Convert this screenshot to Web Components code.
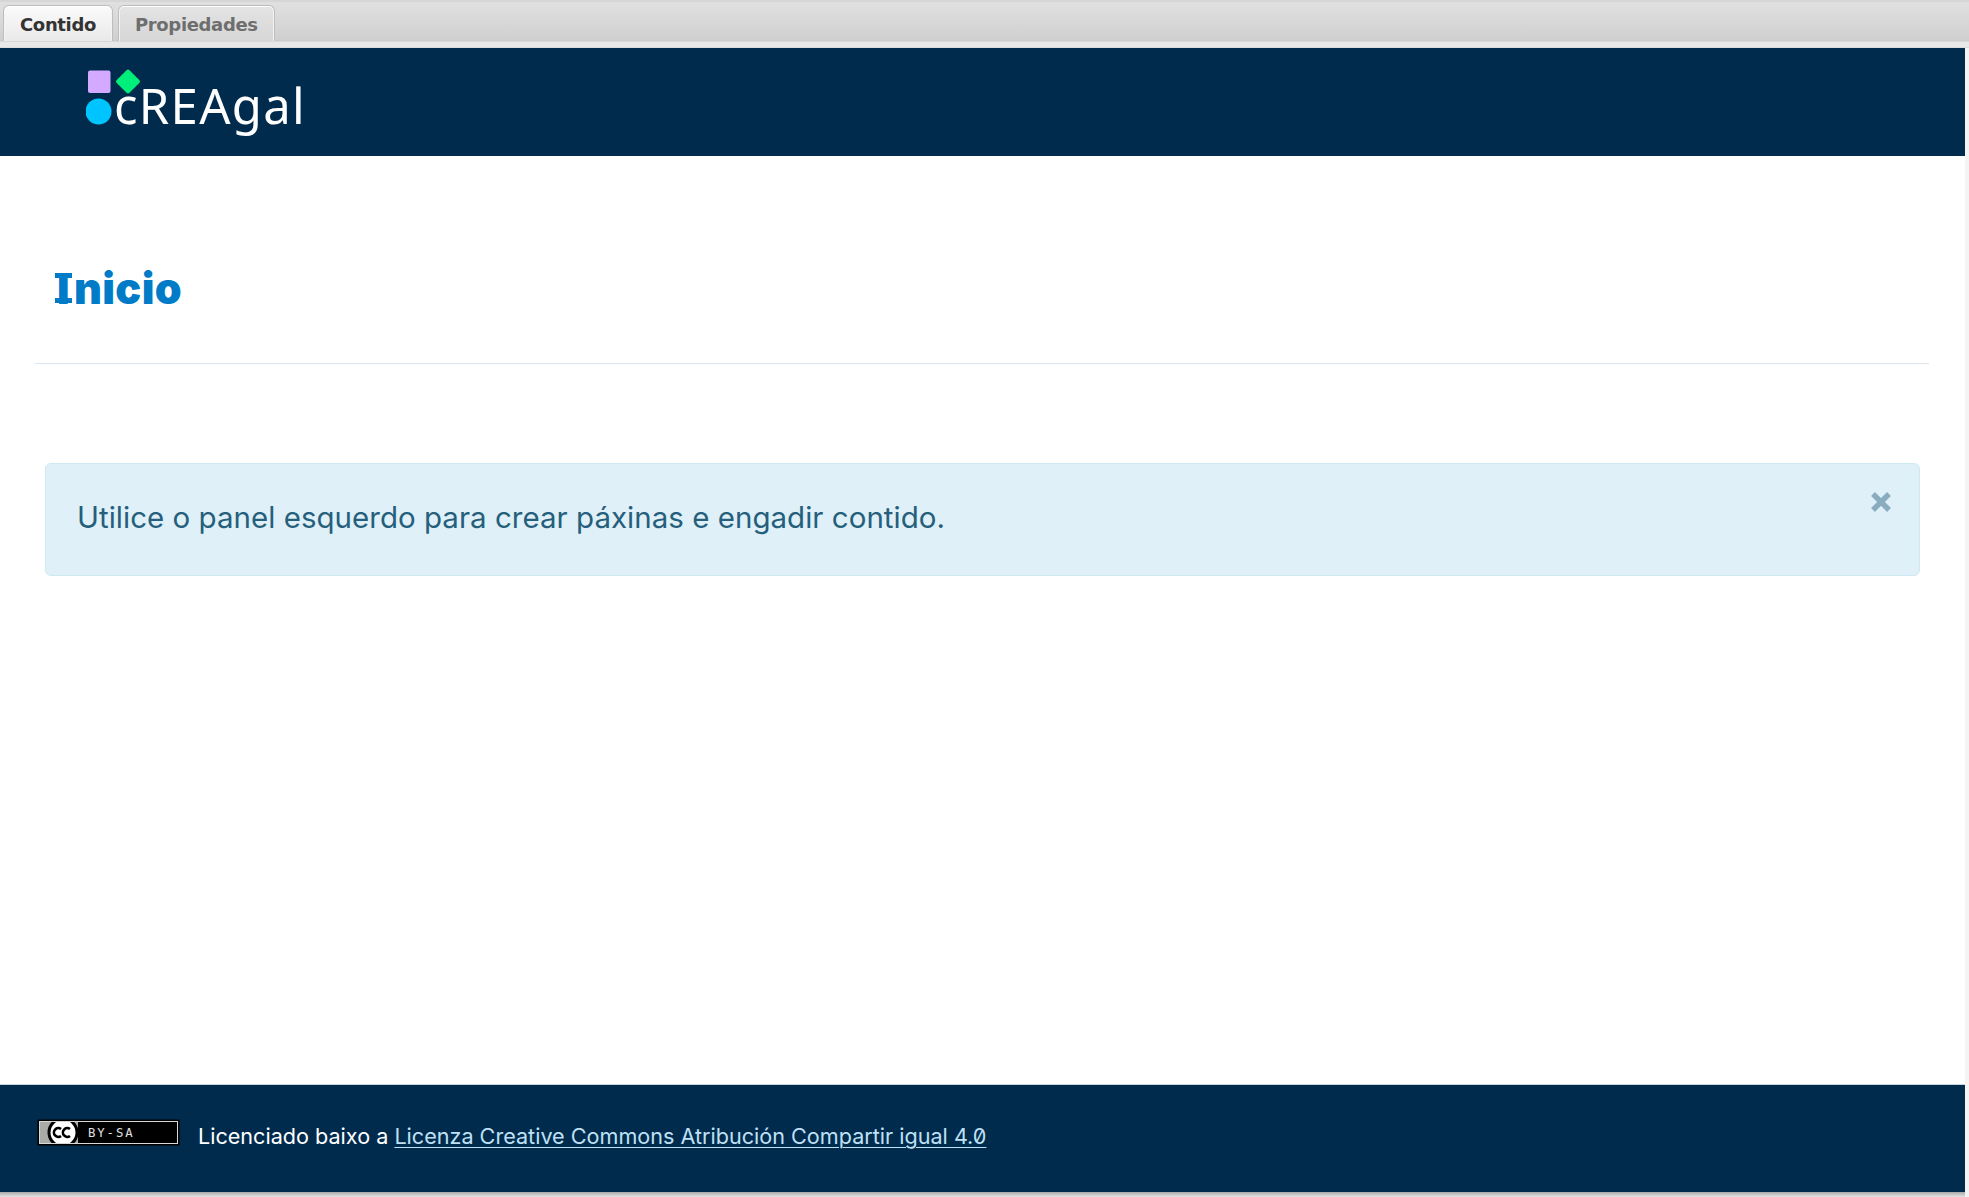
<!DOCTYPE html>
<html lang="gl">
<head>
<meta charset="utf-8">
<title>cREAgal</title>
<style>
    html, body { margin: 0; height: 100%; }
    body { background: #fff; font-family: Inter, "Noto Sans", sans-serif; overflow: hidden; }
</style>
</head>
<body>
<app-shell>
    <tab-bar slot="tabs">
        <tab-item active>Contido</tab-item>
        <tab-item>Propiedades</tab-item>
    </tab-bar>
    <site-header slot="header"></site-header>
    <page-title><span>I</span>nicio</page-title>
    <info-alert>Utilice o panel esquerdo para crear páxinas e engadir contido.</info-alert>
    <site-footer slot="footer">
        Licenciado baixo a <a href="#" slot="link">Licenza Creative Commons Atribución Compartir igual 4.0</a>
    </site-footer>
</app-shell>

<script>
class AppShell extends HTMLElement {
    constructor() {
        super()
        this.attachShadow( { mode: 'open' } )
        this.shadowRoot.innerHTML = `
            <style>
                :host { display: flex; flex-direction: column; height: 1197px; width: 1969px; background: linear-gradient(90deg, #dcdcdc 0, #f4f4f4 2px); }
                .page { flex: 1; display: flex; flex-direction: column; width: 1965px; background: #fff; }
                main { flex: 1; }
                .edge { height: 5px; width: 1965px; background: linear-gradient(#a9a9a9, #e4e4e4); }
            </style>
            <slot name="tabs"></slot>
            <div class="page">
                <slot name="header"></slot>
                <main><slot></slot></main>
                <slot name="footer"></slot>
            </div>
            <div class="edge"></div>
        `
    }
}

class TabBar extends HTMLElement {
    constructor() {
        super()
        this.attachShadow( { mode: 'open' } )
        this.shadowRoot.innerHTML = `
            <style>
                :host { display: flex; box-sizing: border-box; height: 48px; padding: 3px 0 0 3px; gap: 5px; align-items: flex-start;
                    border-top: 2px solid #d6d6d6;
                    background: linear-gradient(#e0e0e0 0, #d0d0d0 38px, #c8c8c8 39px, #e8e8e8 40px, #e8e8e8 45px, #cfcfcf 46px); }
            </style>
            <slot></slot>
        `
    }
}

class TabItem extends HTMLElement {
    constructor() {
        super()
        this.attachShadow( { mode: 'open' } )
        this.shadowRoot.innerHTML = `
            <style>
                :host { display: block; box-sizing: border-box; height: 36px; padding: 0 16px;
                    font: bold 18px/38px "DejaVu Sans", sans-serif; letter-spacing: -0.35px; color: #6e6e6e;
                    border: 1px solid #bdbdbd; border-bottom: 0; border-radius: 6px 6px 0 0;
                    box-shadow: inset 0 1px 0 #fff, inset 1px 0 0 #f4f4f4, inset -1px 0 0 #f4f4f4;
                    background: linear-gradient(#e4e4e4, #d6d6d6); }
                :host([active]) { color: #333; background: linear-gradient(#fbfbfb, #e9e9e9); }
            </style>
            <slot></slot>
        `
    }
}

class SiteHeader extends HTMLElement {
    constructor() {
        super()
        this.attachShadow( { mode: 'open' } )
        this.shadowRoot.innerHTML = `
            <style>
                :host { display: block; height: 108px; background: #002b4d; }
                .logo { display: flex; align-items: flex-start; padding: 20px 0 0 86px; }
                svg { display: block; flex: none; width: 56px; height: 58px; margin-right: -28px; }
                span { font: 400 49px/56px "Noto Sans", sans-serif; color: #fff; letter-spacing: 1.3px; margin-top: 9px; }
            </style>
            <div class="logo">
                <svg viewBox="0 0 56 58">
                    <rect x="2" y="2.5" width="22.5" height="22.5" rx="2" fill="#d3aaff"/>
                    <rect x="33" y="4.5" width="18" height="18" rx="2" fill="#00ee7a" transform="rotate(45 42 13.5)"/>
                    <circle cx="12.5" cy="43.5" r="13" fill="#00c4ff"/>
                </svg>
                <span>cREAgal</span>
            </div>
        `
    }
}

class PageTitle extends HTMLElement {
    constructor() {
        super()
        this.attachShadow( { mode: 'open' } )
        this.shadowRoot.innerHTML = `
            <style>
                :host { display: block; margin: 0 36px 0 35px; padding: 107px 0 50px 20px; border-bottom: 1px solid #dbe6ec; }
                h1 { margin: 0; font: 900 43px/50px Inter, sans-serif; color: #007bc7; letter-spacing: 0.4px; }
                /* Inter no trae la I con remates, se dibujan encima */
                ::slotted(span) { position: relative; display: inline-block; padding: 0 4px 0 2px; }
                ::slotted(span)::before, ::slotted(span)::after { content: ""; position: absolute; left: 0; width: 17px; height: 5px; background: #007bc7; }
                ::slotted(span)::before { top: 10px; }
                ::slotted(span)::after { top: 35px; }
            </style>
            <h1><slot></slot></h1>
        `
    }
}

class InfoAlert extends HTMLElement {
    constructor() {
        super()
        this.attachShadow( { mode: 'open' } )
        this.shadowRoot.innerHTML = `
            <style>
                :host { display: flex; box-sizing: border-box; height: 113px; margin: 99px 45px 0 45px; padding: 0 31px;
                    background: #dff0f8; border: 1px solid #cfe9f3; border-radius: 6px; justify-content: space-between; }
                p { margin: 0; font: 400 29.5px/107px Inter, sans-serif; color: #255f7c; letter-spacing: 0.02px; }
                svg { width: 22px; height: 22px; margin: 27px -4px 0 0; display: block; }
            </style>
            <p><slot></slot></p>
            <svg viewBox="0 0 22 22"><path d="M3 3 19 19M19 3 3 19" stroke="#8aacbf" stroke-width="5.4" fill="none"/></svg>
        `
    }
}

class SiteFooter extends HTMLElement {
    constructor() {
        super()
        this.attachShadow( { mode: 'open' } )
        this.shadowRoot.innerHTML = `
            <style>
                :host { display: flex; box-sizing: border-box; height: 108px; padding: 0 0 6px 37px; align-items: center; gap: 18px;
                    background: #002b4d; border-top: 1px solid #c5d5df; }
                svg { display: block; flex: none; width: 143px; height: 27px; margin-top: -6px; }
                p { margin: 0; font: 400 21.6px/30px Inter, sans-serif; font-feature-settings: "zero" 1; color: #fff; }
                ::slotted(a) { color: #bfe0f5; text-decoration: underline; text-underline-offset: 3px; text-decoration-thickness: 1px; }
            </style>
            <svg viewBox="0 0 143 27">
                <defs><clipPath id="cc"><rect x="2" y="3" width="44" height="21"/></clipPath></defs>
                <rect x="0.5" y="0.5" width="142" height="26" fill="#000"/>
                <rect x="2.5" y="2.5" width="138" height="22" fill="none" stroke="#d8d8d8"/>
                <rect x="3" y="3" width="38" height="21" fill="#a9aca6"/>
                <g clip-path="url(#cc)">
                    <circle cx="26" cy="13.5" r="14" fill="#fff" stroke="#000" stroke-width="3"/>
                </g>
                <path d="M24 10a4.4 4.4 0 1 0 0 7M33 10a4.4 4.4 0 1 0 0 7" stroke="#000" stroke-width="2.6" fill="none"/>
                <text x="51" y="18" font-family="'DejaVu Sans Mono', monospace" font-size="12.3" letter-spacing="1.9" fill="#e0e0e0">BY-SA</text>
            </svg>
            <p><slot></slot><slot name="link"></slot></p>
        `
    }
}

customElements.define( 'app-shell', AppShell )
customElements.define( 'tab-bar', TabBar )
customElements.define( 'tab-item', TabItem )
customElements.define( 'site-header', SiteHeader )
customElements.define( 'page-title', PageTitle )
customElements.define( 'info-alert', InfoAlert )
customElements.define( 'site-footer', SiteFooter )
</script>
</body>
</html>
